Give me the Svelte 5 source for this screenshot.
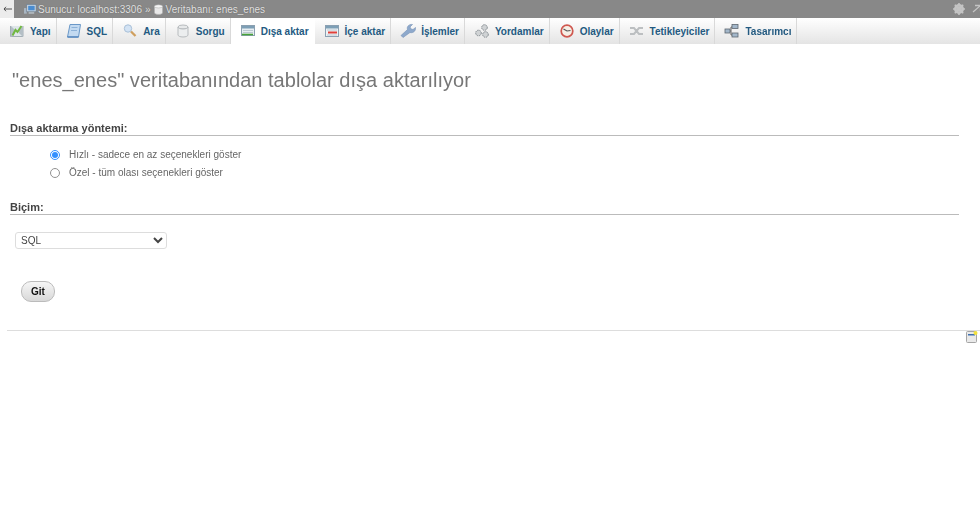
<script>
  const tabs = [
    { label: 'Yapı', icon: 'yapi' },
    { label: 'SQL', icon: 'sql' },
    { label: 'Ara', icon: 'ara' },
    { label: 'Sorgu', icon: 'sorgu' },
    { label: 'Dışa aktar', icon: 'disa', active: true },
    { label: 'İçe aktar', icon: 'ice' },
    { label: 'İşlemler', icon: 'islem' },
    { label: 'Yordamlar', icon: 'yordam' },
    { label: 'Olaylar', icon: 'olay' },
    { label: 'Tetikleyiciler', icon: 'tetik' },
    { label: 'Tasarımcı', icon: 'tasarim' }
  ];
</script>

{#snippet icon(name)}
  <svg class="ticon" viewBox="0 0 16 16" width="16" height="16" aria-hidden="true">
    {#if name === 'yapi'}
      <path d="M1.500 3v10.500h12.500V3" fill="#dfe6ea" stroke="#a3aeb5" />
      <path d="M2 3l4 4v3l-4 4zM14 3l-4 4v3l4 4z" fill="#b4bfc6" />
      <path d="M3.500 12.500l3-5.500 2 2 4-6" fill="none" stroke="#70b840" stroke-width="2" />
    {:else if name === 'sql'}
      <path d="M4 1.500h10.500l-2 12.500H1.500z" fill="#c3daf1" stroke="#6a98c8" />
      <path d="M5.500 4.500h6M5 7.500h6" stroke="#8db2d8" />
      <path d="M1.500 14h11" stroke="#4f83bb" stroke-width="1.300" />
    {:else if name === 'ara'}
      <circle cx="6" cy="5.500" r="3.700" fill="#d3e3f4" stroke="#a9c0d8" />
      <path d="M9 8.500l4.500 4.500" stroke="#cf9f5e" stroke-width="2.300" />
    {:else if name === 'sorgu'}
      <ellipse cx="8" cy="4" rx="5" ry="2" fill="#e7e9ea" stroke="#b7bbbe" />
      <path d="M3 4v8c0 1 2 2 5 2s5-1 5-2V4c0 1-2 2-5 2s-5-1-5-2z" fill="#eceeef" stroke="#b7bbbe" />
    {:else if name === 'disa'}
      <rect x="1.500" y="2.500" width="13" height="10" fill="#e8eef2" stroke="#8ba0b0" />
      <rect x="2" y="3" width="12" height="2.500" fill="#7d9fb6" />
      <path d="M3 7.500h10M3 9.500h10" stroke="#bcc9d2" />
      <path d="M2 11.500h11" stroke="#48a23a" stroke-width="1.600" />
    {:else if name === 'ice'}
      <rect x="1.500" y="2.500" width="13" height="11" fill="#eef2f5" stroke="#8aa0b2" />
      <rect x="2" y="3" width="12" height="2.500" fill="#7d9fb6" />
      <path d="M3 7h10M3 12h10" stroke="#bcc9d2" />
      <path d="M4 9.500h9" stroke="#e0403a" stroke-width="2" />
    {:else if name === 'islem'}
      <path d="M3 14.500l-2-2 6.500-6c-1-3 1.500-5.500 5-5l-2.500 2.500 1 2 2 .5 2.500-2c.5 3.500-2.500 6-5.500 5z" fill="#8ea9cc" stroke="#7391b5" stroke-width=".6" />
    {:else if name === 'yordam'}
      <g fill="#d0d3d5" stroke="#80878c" stroke-width="1">
        <circle cx="10.500" cy="4.500" r="2.800" stroke-dasharray="1.500 .8" />
        <circle cx="4.500" cy="10" r="2.800" stroke-dasharray="1.500 .8" />
        <circle cx="11.500" cy="11.500" r="2.800" stroke-dasharray="1.500 .8" />
      </g>
    {:else if name === 'olay'}
      <circle cx="8" cy="8" r="5.800" fill="#f6efe6" stroke="#cf5850" stroke-width="1.700" />
      <path d="M4.500 6L8 8l3.500-.5" fill="none" stroke="#555" stroke-width="1.200" />
    {:else if name === 'tetik'}
      <path d="M1 5h4l5 6h4M1 11h4l5-6h4" fill="none" stroke="#bcbfc1" stroke-width="2" />
    {:else}
      <g stroke="#5c6670" fill="#a3b7ca" stroke-width=".8">
        <rect x="8" y="1.500" width="6" height="4" />
        <rect x="8" y="10" width="6" height="4" />
        <rect x="1" y="6" width="5" height="4" />
      </g>
      <path d="M6 8h1V4h1M7 8v4h1" fill="none" stroke="#666" />
    {/if}
  </svg>
{/snippet}

<div class="page">
  <header class="topbar">
    <div class="back">
      <svg viewBox="0 0 9 6" width="9" height="6" aria-hidden="true">
        <path d="M9 3H1M3 .8L1 3l2 2.200" fill="none" stroke="#444" stroke-width=".9" />
      </svg>
    </div>
    <nav class="crumbs">
      <svg viewBox="0 0 14 12" width="13" height="12" aria-hidden="true">
        <rect x="0" y="5" width="3" height="6" fill="#a9b6c2" />
        <rect x="3" y="1" width="10" height="8" fill="#d3dbe2" stroke="#6b7f92" stroke-width=".8" />
        <rect x="4.500" y="2.500" width="7" height="5" fill="#4a8cd0" />
        <rect x="5" y="9.500" width="6" height="1.500" fill="#bcc5cc" />
      </svg>
      <span>Sunucu: localhost:3306</span>
      <span class="sep">»</span>
      <svg viewBox="0 0 10 12" width="9" height="11" aria-hidden="true">
        <path d="M.5 2.500v7c0 1 2 2 4.500 2s4.500-1 4.500-2v-7z" fill="#e8e8e8" stroke="#aaa" stroke-width=".6" />
        <ellipse cx="5" cy="2.500" rx="4.500" ry="1.800" fill="#f5f5f5" stroke="#aaa" stroke-width=".6" />
      </svg>
      <span class="db">Veritabanı: enes_enes</span>
    </nav>
    <div class="tools">
      <svg viewBox="0 0 12 12" width="12" height="12" aria-hidden="true">
        <circle cx="6" cy="6" r="3.700" fill="none" stroke="#c4c4c4" stroke-width="2.600" />
        <path d="M6 0v12M0 6h12M1.800 1.800l8.400 8.400M10.200 1.800l-8.400 8.400" stroke="#c4c4c4" stroke-width="1.600" />
      </svg>
      <svg viewBox="0 0 10 10" width="10" height="10" aria-hidden="true">
        <path d="M1 8l7-6M3 1.500h5.500V7" fill="none" stroke="#c4c4c4" stroke-width="1.300" />
      </svg>
    </div>
  </header>

  <ul class="tabs">
    {#each tabs as t}
      <li class="tab" class:active={t.active}>
        {@render icon(t.icon)}
        <span>{t.label}</span>
      </li>
    {/each}
  </ul>

  <main class="content">
    <h2>"enes_enes" veritabanından tablolar dışa aktarılıyor</h2>

    <section class="method">
      <h3>Dışa aktarma yöntemi:</h3>
      <div class="options">
        <label><input type="radio" name="m" checked /> <span>Hızlı - sadece en az seçenekleri göster</span></label>
        <label><input type="radio" name="m" /> <span>Özel - tüm olası seçenekleri göster</span></label>
      </div>
    </section>

    <section class="format">
      <h3>Biçim:</h3>
      <select><option>SQL</option></select>
    </section>

    <button type="button">Git</button>
  </main>

  <footer class="foot">
    <svg class="note" viewBox="0 0 12 12" width="12" height="12" aria-hidden="true">
      <rect x=".5" y=".5" width="10" height="11" rx="1" fill="#e9e9e9" stroke="#a5a5a5" />
      <rect x="2" y="3" width="7" height="1.500" fill="#3e6fb0" />
      <circle cx="9.500" cy="2" r="2" fill="#f2e13c" />
    </svg>
  </footer>
</div>

<style>
  :global(body) {
    margin: 0;
    background: #fff;
  }
  .page {
    width: 980px;
    height: 530px;
    overflow: hidden;
    font-family: "Liberation Sans", Arial, sans-serif;
    color: #444;
    filter: blur(0.3px);
  }
  .topbar {
    display: flex;
    align-items: center;
    height: 18px;
    background: #888;
    color: #e2e2e2;
    font-size: 10px;
  }
  .back {
    display: flex;
    align-items: center;
    justify-content: center;
    width: 14px;
    height: 18px;
    background: #ececec;
  }
  .crumbs {
    display: flex;
    align-items: center;
    gap: 1px;
    margin-left: 10px;
    flex: 1;
    white-space: nowrap;
    text-shadow: 0 0 1px #555;
  }
  .sep {
    margin: 0 2px;
  }
  .db {
    margin-left: 2px;
  }
  .tools {
    display: flex;
    align-items: center;
    gap: 7px;
    margin-right: -2px;
  }
  .tabs {
    display: flex;
    margin: 0;
    padding: 0;
    list-style: none;
    height: 26px;
    background: linear-gradient(#fff, #e4e4e4);
  }
  .tab {
    display: flex;
    align-items: center;
    gap: 5px;
    padding: 0 5px 0 9px;
    border-right: 1px solid #d9d9d9;
    font-size: 10px;
    font-weight: bold;
    color: #235a81;
    white-space: nowrap;
  }
  .tab.active {
    background: #fff;
    border-right-color: #fff;
  }
  .content {
    margin-left: 10px;
    width: 949px;
    box-sizing: border-box;
    padding-top: 24px;
    height: 286px;
  }
  h2 {
    margin: 0 0 0 2px;
    font-size: 20px;
    line-height: 24px;
    font-weight: normal;
    color: #777;
    letter-spacing: 0.02px;
  }
  h3 {
    margin: 0;
    font-size: 11px;
    line-height: 12px;
    padding-bottom: 1px;
    font-weight: bold;
    color: #444;
    border-bottom: 1px solid #bbb;
  }
  .method {
    margin-top: 30px;
  }
  .options {
    display: flex;
    flex-direction: column;
    gap: 5px;
    margin: 12px 0 0 40px;
  }
  label {
    display: flex;
    align-items: center;
    gap: 9px;
    height: 13px;
    font-size: 10px;
    color: #666;
  }
  input {
    margin: 0;
    width: 10px;
    height: 10px;
    opacity: 0.8;
  }
  .format {
    margin-top: 22px;
  }
  select {
    display: block;
    margin: 17px 0 0 5px;
    width: 152px;
    height: 17px;
    font: 10px "Liberation Sans", Arial, sans-serif;
    color: #444;
    background: #fff;
    border: 1px solid #ddd;
    border-radius: 3px;
    padding-left: 1px;
  }
  button {
    display: block;
    margin: 32px 0 0 11px;
    width: 34px;
    height: 21px;
    padding: 0;
    font: bold 10px "Liberation Sans", Arial, sans-serif;
    color: #111;
    border: 1px solid #bbb;
    border-radius: 10px;
    background: linear-gradient(#f6f6f6, #d8d8d8);
  }
  .foot {
    margin-left: 7px;
    border-top: 1px solid #ddd;
    display: flex;
    justify-content: flex-end;
    padding-right: 2px;
  }
  .note {
    display: block;
  }
</style>
